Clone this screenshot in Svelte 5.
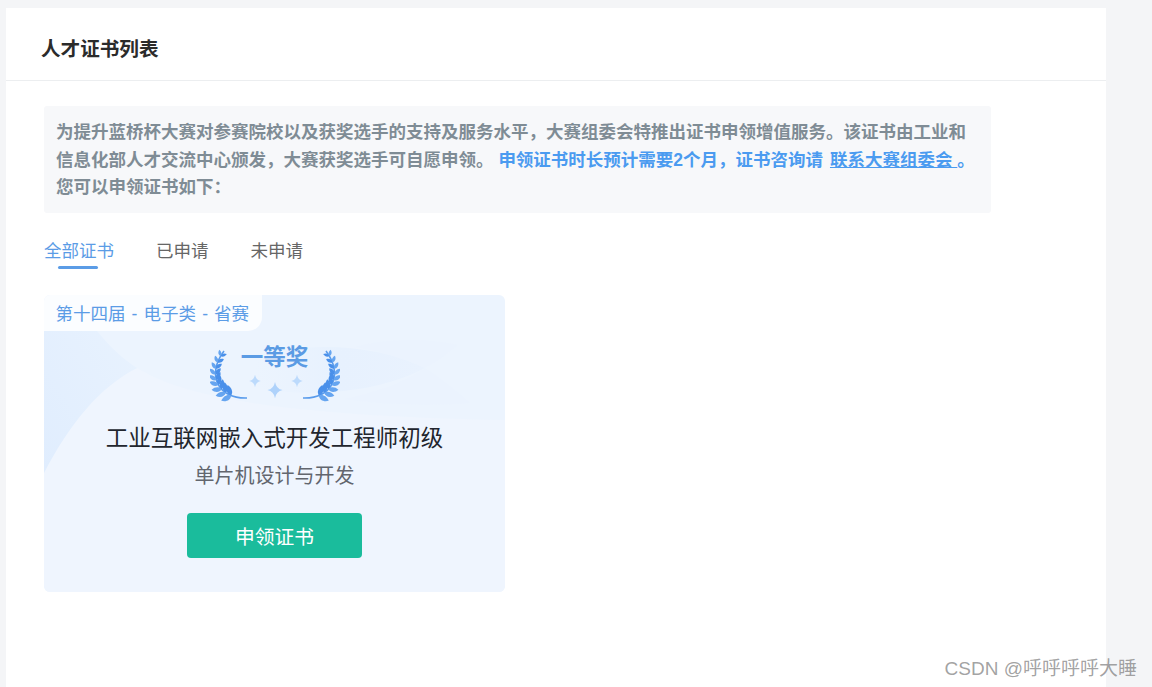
<script>
  const tabs = ["全部证书", "已申请", "未申请"];
  let active = $state(0);

  // leaves along the wreath stem, left side; right side is mirrored
  function bez(t) {
    const p = [[14, 4], [-4, 28], [8, 52], [37, 51]];
    const u = 1 - t;
    const x = u*u*u*p[0][0] + 3*u*u*t*p[1][0] + 3*u*t*t*p[2][0] + t*t*t*p[3][0];
    const y = u*u*u*p[0][1] + 3*u*u*t*p[1][1] + 3*u*t*t*p[2][1] + t*t*t*p[3][1];
    const dx = 3*u*u*(p[1][0]-p[0][0]) + 6*u*t*(p[2][0]-p[1][0]) + 3*t*t*(p[3][0]-p[2][0]);
    const dy = 3*u*u*(p[1][1]-p[0][1]) + 6*u*t*(p[2][1]-p[1][1]) + 3*t*t*(p[3][1]-p[2][1]);
    return { x, y, a: Math.atan2(dy, dx) * 180 / Math.PI + 180 };
  }

  const leaves = [];
  for (let i = 0; i < 9; i++) {
    const t = 0.07 + i * 0.09;
    const b = bez(t);
    const s = 0.72 + i * 0.065;
    const spread = i > 5 ? 50 : 42;
    leaves.push({ x: b.x, y: b.y, a: b.a + spread, s, c: "#4a90ea" });
    leaves.push({ x: b.x, y: b.y, a: b.a - spread, s, c: "#66a5f0" });
  }
  const stem = "M14 4C-4 28 8 52 37 51";
  const star = "M0 -6.5Q1 -1 6 0Q1 1 0 6.5Q-1 1 -6 0Q-1 -1 0 -6.5Z";
</script>

<div class="page">
  <div class="panel">
    <header class="panel-head">人才证书列表</header>

    <div class="panel-body">
      <div class="notice">
        为提升蓝桥杯大赛对参赛院校以及获奖选手的支持及服务水平，大赛组委会特推出证书申领增值服务。该证书由工业和信息化部人才交流中心颁发，大赛获奖选手可自愿申领。
        <span class="hl">申领证书时长预计需要2个月，证书咨询请 <a href="#contact">联系大赛组委会{" "}</a>。</span><br />您可以申领证书如下：
      </div>

      <nav class="tabs">
        {#each tabs as tab, i}
          <button class="tab" class:active={active === i} onclick={() => (active = i)}>{tab}</button>
        {/each}
      </nav>

      <div class="cert">
        <svg class="waves" viewBox="0 0 461 297" preserveAspectRatio="none" aria-hidden="true">
          <defs>
            <linearGradient id="blob" x1="0" y1="1" x2="1" y2="0">
              <stop offset="0" stop-color="#e0edfe" />
              <stop offset="1" stop-color="#e8f2fe" />
            </linearGradient>
            <linearGradient id="lens" x1="0" y1="0" x2="1" y2="0">
              <stop offset="0" stop-color="#e8f2fe" stop-opacity="0" />
              <stop offset=".5" stop-color="#e7f1fe" />
              <stop offset="1" stop-color="#e9f2fe" />
            </linearGradient>
          </defs>
          <path d="M0 178C25 130 55 92 93 73C130 95 200 120 461 125V297H0Z" fill="#eff5fe" />
          <path d="M0 36H53C66 52 80 65 93 73C55 92 25 130 0 178Z" fill="url(#blob)" />
          <path d="M210 60C270 46 335 50 381 73C340 95 270 105 210 92Z" fill="url(#lens)" />
          <path d="M381 73C400 85 415 98 426 108C390 111 340 110 300 104C330 98 360 88 381 73Z" fill="#ebf3fe" />
          <path d="M381 73C395 65 405 58 414 50C380 42 340 44 310 52C335 56 360 63 381 73Z" fill="#ebf3fe" />
        </svg>
        <div class="cert-tag">第十四届 - 电子类 - 省赛</div>
        <div class="award">
          <svg class="wreath" width="130" height="60" viewBox="0 0 130 60" aria-hidden="true">
            {#each [false, true] as flip}
              <g transform={flip ? "translate(130 0) scale(-1 1)" : ""}>
                <path d={stem} fill="none" stroke="#5a9cec" stroke-width="1.6" />
                {#each leaves as l}
                  <path
                    d="M0 0C2 -3 6 -3 9 0C6 2.6 2 2.6 0 0Z"
                    fill={l.c}
                    transform="translate({l.x} {l.y}) rotate({l.a}) scale({l.s})"
                  />
                {/each}
              </g>
            {/each}
            <path d={star} fill="#bcdafc" transform="translate(45 34) scale(.95)" />
            <path d={star} fill="#aed2fb" transform="translate(65 43) scale(1.25)" />
            <path d={star} fill="#bcdafc" transform="translate(87 34) scale(.95)" />
          </svg>
          <span class="award-name">一等奖</span>
        </div>
        <div class="cert-title">工业互联网嵌入式开发工程师初级</div>
        <div class="cert-sub">单片机设计与开发</div>
        <button class="apply">申领证书</button>
      </div>
    </div>
  </div>
  <span class="watermark">CSDN @呼呼呼呼大睡</span>
</div>

<style>
  :global(body) {
    background-color: #f4f5f7;
    font-family: "Liberation Sans", "Noto Sans CJK SC", sans-serif;
  }

  .page {
    position: relative;
    height: 687px;
    overflow: hidden;
    padding: 8px 46px 0 6px;
    box-sizing: border-box;
  }

  .panel {
    height: 100%;
    background-color: #fff;
  }

  .panel-head {
    height: 73px;
    box-sizing: border-box;
    padding-left: 35px;
    line-height: 83px;
    font-size: 19.6px;
    font-weight: 700;
    color: #2b2b2b;
    border-bottom: 1px solid #eceef0;
  }

  .panel-body {
    padding: 25px 0 0 38px;
  }

  .notice {
    width: 947px;
    height: 107px;
    box-sizing: border-box;
    padding: 13px 12px;
    background-color: #f7f8fa;
    border-radius: 3px;
    font-size: 17.5px;
    line-height: 27.5px;
    font-weight: 700;
    color: #7f8c95;
  }

  .hl, .hl a {
    color: #4b9bf0;
  }

  .hl {
    word-spacing: 2px;
  }

  .hl a {
    text-decoration: underline;
    white-space: pre;
    word-spacing: 0;
  }

  .tabs {
    display: flex;
    gap: 42px;
    margin-top: 24px;
    height: 32px;
  }

  .tab {
    position: relative;
    padding: 0;
    border: none;
    background: none;
    font: inherit;
    font-size: 17.5px;
    line-height: 28px;
    height: 28px;
    color: #666;
    cursor: pointer;
  }

  .tab.active {
    color: #5b9ce6;
  }

  .tab.active::after {
    content: "";
    position: absolute;
    left: 14px;
    bottom: -4px;
    width: 40px;
    height: 3px;
    border-radius: 2px;
    background-color: #5b9ce6;
  }

  .cert {
    position: relative;
    overflow: hidden;
    width: 461px;
    height: 297px;
    margin-top: 26px;
    background-color: #ecf4fe;
    border-radius: 6px;
    display: flex;
    flex-direction: column;
    align-items: center;
  }

  .waves {
    position: absolute;
    inset: 0;
    width: 100%;
    height: 100%;
  }

  .cert-tag {
    position: relative;
    align-self: flex-start;
    height: 36px;
    line-height: 38px;
    padding: 0 11.5px;
    width: 218px;
    box-sizing: border-box;
    white-space: nowrap;
    background-color: #fbfdff;
    border-bottom-right-radius: 14px;
    font-size: 17.5px;
    word-spacing: 1.25px;
    color: #5b9ce6;
  }

  .award {
    position: relative;
    width: 130px;
    height: 60px;
    margin-top: 16px;
  }

  .wreath {
    display: block;
    filter: blur(0.3px);
  }

  .award-name {
    position: absolute;
    top: -3px;
    left: 0;
    right: 0;
    text-align: center;
    font-size: 22.5px;
    line-height: 28px;
    font-weight: 700;
    color: #5b9be4;
  }

  .cert-title {
    position: relative;
    margin-top: 17px;
    font-size: 22.5px;
    line-height: 30px;
    color: #22262e;
  }

  .cert-sub {
    position: relative;
    margin-top: 8px;
    font-size: 20px;
    line-height: 28px;
    color: #62666e;
  }

  .apply {
    position: relative;
    margin-top: 23px;
    width: 175px;
    height: 45px;
    border: none;
    border-radius: 4px;
    background-color: #1abc9c;
    color: #fff;
    font: inherit;
    font-size: 19.8px;
    padding: 0 0 1px;
    cursor: pointer;
  }

  .watermark {
    position: absolute;
    right: 15px;
    bottom: 6px;
    font-size: 19px;
    line-height: 24px;
    color: rgba(110, 110, 110, 0.65);
  }
</style>
